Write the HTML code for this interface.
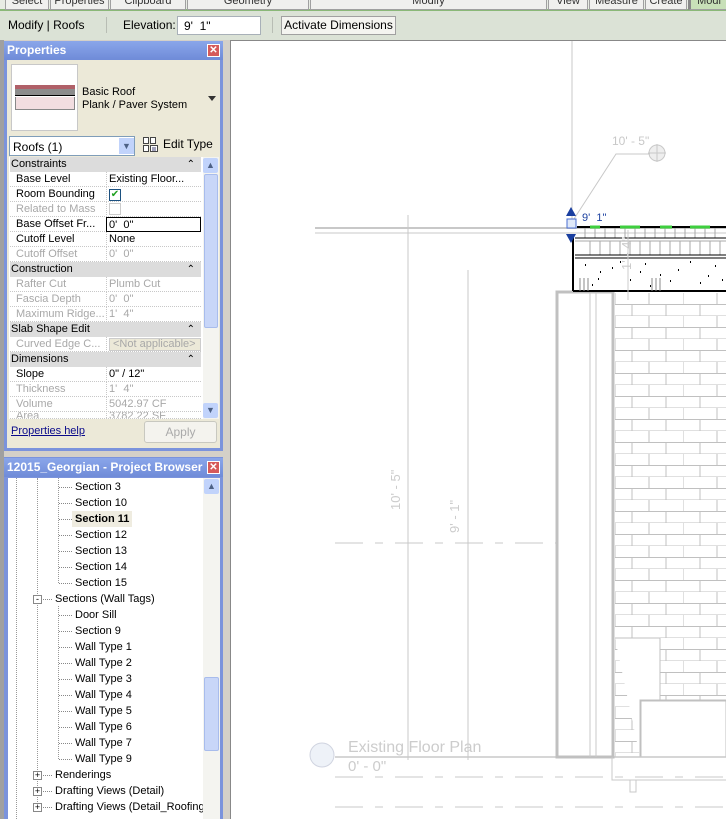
<!DOCTYPE html>
<html><head><meta charset="utf-8"><style>
*{margin:0;padding:0;box-sizing:border-box}
body{width:726px;height:819px;overflow:hidden;background:#fff;font-family:"Liberation Sans",sans-serif;font-size:11px;color:#000;position:relative}
.a{position:absolute}
.tab{position:absolute;top:0;height:10px;background:#f0f0ee;border:1px solid #a0a0a0;border-top:none;font-size:11px;line-height:2px;text-align:center;color:#333;overflow:hidden}
.hdr{position:absolute;height:19px;background:linear-gradient(#8aa6ea,#6f8bd8);color:#fff;font-weight:bold;font-size:12px;line-height:19px;padding-left:3px}
.x{position:absolute;right:3px;top:3px;width:13px;height:13px;background:#d65a5a;border:1px solid #fff;color:#fff;font-size:10px;line-height:11px;text-align:center}
.row{position:absolute;left:10px;width:191px;height:15px;border-bottom:1px dotted #c8c8c8;background:#fff;line-height:14px}
.row .l{position:absolute;left:6px}
.row .v{position:absolute;left:96px;top:0;height:15px;border-left:1px dotted #c8c8c8;padding-left:2px;width:95px}
.g{color:#a8a8a8}
.sec{position:absolute;left:10px;width:191px;height:15px;background:#dcdcdc;line-height:14px;padding-left:1px}
.sec:after{content:"\2303";position:absolute;right:6px;top:1px;font-size:10px}
.t{position:absolute;line-height:16px;height:16px}
.dl{position:absolute;border-top:1px dotted #888;height:0}
</style></head><body>
<div class="a" style="left:0;top:0;width:726px;height:40px;background:#dbe2d6"></div>
<div class="a" style="left:0;top:0;width:726px;height:11px;background:#e8ebe4;border-bottom:2px solid #8ab878"></div>
<div class="tab" style="left:5px;width:44px">Select</div>
<div class="tab" style="left:50px;width:59px">Properties</div>
<div class="tab" style="left:110px;width:76px">Clipboard</div>
<div class="tab" style="left:187px;width:122px">Geometry</div>
<div class="tab" style="left:310px;width:237px">Modify</div>
<div class="tab" style="left:548px;width:40px">View</div>
<div class="tab" style="left:589px;width:55px">Measure</div>
<div class="tab" style="left:645px;width:42px">Create</div>
<div class="tab" style="left:688px;width:40px;background:#c8e0b8;border-left:3px solid #888">Modi</div>
<div class="a" style="left:8px;top:18px;font-size:12px">Modify | Roofs</div>
<div class="a" style="left:106px;top:17px;width:1px;height:16px;background:#b8bdb4"></div>
<div class="a" style="left:123px;top:18px;font-size:12px">Elevation:</div>
<div class="a" style="left:177px;top:16px;width:84px;height:19px;background:#fff;border:1px solid #a8b0b8;padding:2px 0 0 6px;font-size:12px">9'&nbsp; 1"</div>
<div class="a" style="left:272px;top:17px;width:1px;height:16px;background:#b8bdb4"></div>
<div class="a" style="left:281px;top:16px;width:115px;height:19px;background:#f4f4f0;border:1px solid #a0a0a0;font-size:12px;text-align:center;line-height:17px">Activate Dimensions</div>
<div class="a" style="left:0;top:40px;width:231px;height:779px;background:#d4d0c8"></div>
<div class="a" style="left:0;top:40px;width:4px;height:779px;background:#a0a0a0"></div>
<div class="a" style="left:4px;top:41px;width:219px;height:410px;background:#7b93dc"></div>
<div class="a" style="left:7px;top:60px;width:213px;height:388px;background:#ece9d8"></div>
<div class="hdr" style="left:4px;top:41px;width:219px">Properties<div class="x">✕</div></div>
<div class="a" style="left:11px;top:64px;width:67px;height:67px;background:#fff;border:1px solid #c8c8c8"></div>
<div class="a" style="left:15px;top:85px;width:60px;height:4px;background:#b06068"></div>
<div class="a" style="left:15px;top:89px;width:60px;height:7px;background:#8c8c8c;border-bottom:1px solid #000"></div>
<div class="a" style="left:15px;top:97px;width:60px;height:13px;background:#f2dde0;border:1px solid #888;border-top:none"></div>
<div class="a" style="left:82px;top:86px;font-size:11px;line-height:13px">Basic Roof<br>Plank / Paver System</div>
<div class="a" style="left:208px;top:96px;border:4px solid transparent;border-top:5px solid #333"></div>
<div class="a" style="left:9px;top:136px;width:126px;height:20px;background:#fff;border:1px solid #7f9db9;padding:3px 0 0 3px;font-size:12px">Roofs (1)</div>
<div class="a" style="left:119px;top:138px;width:15px;height:16px;background:#c1d3fb;color:#4d6185;font-size:9px;text-align:center;line-height:16px">▼</div>
<svg class="a" style="left:142px;top:136px" width="18" height="17"><path d="M1.5 1.5h5v6h-5zM1.5 9.5h5v6h-5zM8.5 1.5h5v6h-5zM8.5 9.5h7v6h-7z" fill="#fff" stroke="#444"/><path d="M10 12h4M10 14h4" stroke="#447"/></svg>
<div class="a" style="left:163px;top:137px;font-size:12px">Edit Type</div>
<div class="a" style="left:9px;top:157px;width:210px;height:262px;background:#fff"></div>
<div class="sec" style="top:157px">Constraints</div>
<div class="row" style="top:172px"><span class="l">Base Level</span><span class="v">Existing Floor...</span></div>
<div class="row" style="top:187px"><span class="l">Room Bounding</span><span class="v"><span style="display:inline-block;width:12px;height:12px;border:1px solid #1c5180;color:#21a121;font-size:10px;line-height:10px;text-align:center;margin-top:1px">✔</span></span></div>
<div class="row g" style="top:202px"><span class="l">Related to Mass</span><span class="v"><span style="display:inline-block;width:12px;height:12px;border:1px solid #ccc;margin-top:1px"></span></span></div>
<div class="row" style="top:217px"><span class="l">Base Offset Fr...</span><span class="v" style="border:1px solid #000;height:15px">0'&nbsp; 0"</span></div>
<div class="row" style="top:232px"><span class="l">Cutoff Level</span><span class="v">None</span></div>
<div class="row g" style="top:247px"><span class="l">Cutoff Offset</span><span class="v">0'&nbsp; 0"</span></div>
<div class="sec" style="top:262px">Construction</div>
<div class="row g" style="top:277px"><span class="l">Rafter Cut</span><span class="v">Plumb Cut</span></div>
<div class="row g" style="top:292px"><span class="l">Fascia Depth</span><span class="v">0'&nbsp; 0"</span></div>
<div class="row g" style="top:307px"><span class="l">Maximum Ridge...</span><span class="v">1'&nbsp; 4"</span></div>
<div class="sec" style="top:322px">Slab Shape Edit</div>
<div class="row g" style="top:337px"><span class="l">Curved Edge C...</span><span class="v"><span style="display:inline-block;background:#ece9d8;border:1px solid #ccc;width:92px;height:13px;line-height:11px;padding-left:3px">&lt;Not applicable&gt;</span></span></div>
<div class="sec" style="top:352px">Dimensions</div>
<div class="row" style="top:367px"><span class="l">Slope</span><span class="v">0" / 12"</span></div>
<div class="row g" style="top:382px"><span class="l">Thickness</span><span class="v">1'&nbsp; 4"</span></div>
<div class="row g" style="top:397px"><span class="l">Volume</span><span class="v">5042.97 CF</span></div>
<div class="row g" style="top:412px;height:7px;overflow:hidden"><span class="l" style="top:-3px">Area</span><span class="v" style="top:-3px">3782.22 SF</span></div>
<div class="a" style="left:203px;top:157px;width:16px;height:262px;background:#f4f4f0"></div>
<div class="a" style="left:203px;top:158px;width:15px;height:15px;background:#c1d3fb;border-radius:2px;color:#4d6185;font-size:9px;text-align:center;line-height:15px">▲</div>
<div class="a" style="left:204px;top:174px;width:14px;height:154px;background:#c8d6f8;border:1px solid #a8bcec;border-radius:2px"></div>
<div class="a" style="left:203px;top:403px;width:15px;height:15px;background:#c1d3fb;border-radius:2px;color:#4d6185;font-size:9px;text-align:center;line-height:15px">▼</div>
<div class="a" style="left:11px;top:425px;color:#0a0a8a;text-decoration:underline;font-size:11px">Properties help</div>
<div class="a" style="left:144px;top:421px;width:73px;height:22px;border:1px solid #c8c8c0;border-radius:3px;background:#f4f3ee;color:#aaa;text-align:center;line-height:20px;font-size:12px">Apply</div>
<div class="a" style="left:4px;top:457px;width:219px;height:362px;background:#7b93dc"></div>
<div class="hdr" style="left:4px;top:458px;width:219px">12015_Georgian - Project Browser<div class="x">✕</div></div>
<div class="a" style="left:8px;top:478px;width:212px;height:341px;background:#fff"></div>
<div class="a" style="left:16px;top:478px;height:341px;border-left:1px dotted #999"></div>
<div class="a" style="left:37px;top:478px;height:330px;border-left:1px dotted #999"></div>
<div class="a" style="left:58px;top:478px;height:105px;border-left:1px dotted #999"></div>
<div class="a" style="left:58px;top:606px;height:153px;border-left:1px dotted #999"></div>
<div class="dl" style="left:59px;top:487px;width:13px"></div><div class="t" style="left:75px;top:479px">Section 3</div>
<div class="dl" style="left:59px;top:503px;width:13px"></div><div class="t" style="left:75px;top:495px">Section 10</div>
<div class="dl" style="left:59px;top:519px;width:13px"></div><div class="t" style="left:72px;top:511px;background:#efece0;font-weight:bold;padding:0 3px">Section 11</div>
<div class="dl" style="left:59px;top:535px;width:13px"></div><div class="t" style="left:75px;top:527px">Section 12</div>
<div class="dl" style="left:59px;top:551px;width:13px"></div><div class="t" style="left:75px;top:543px">Section 13</div>
<div class="dl" style="left:59px;top:567px;width:13px"></div><div class="t" style="left:75px;top:559px">Section 14</div>
<div class="dl" style="left:59px;top:583px;width:13px"></div><div class="t" style="left:75px;top:575px">Section 15</div>
<div class="a" style="left:33px;top:595px;width:9px;height:9px;border:1px solid #888;background:#fff;font-size:9px;line-height:6px;text-align:center">-</div>
<div class="dl" style="left:43px;top:599px;width:9px"></div><div class="t" style="left:55px;top:591px">Sections (Wall Tags)</div>
<div class="dl" style="left:59px;top:615px;width:13px"></div><div class="t" style="left:75px;top:607px">Door Sill</div>
<div class="dl" style="left:59px;top:631px;width:13px"></div><div class="t" style="left:75px;top:623px">Section 9</div>
<div class="dl" style="left:59px;top:647px;width:13px"></div><div class="t" style="left:75px;top:639px">Wall Type 1</div>
<div class="dl" style="left:59px;top:663px;width:13px"></div><div class="t" style="left:75px;top:655px">Wall Type 2</div>
<div class="dl" style="left:59px;top:679px;width:13px"></div><div class="t" style="left:75px;top:671px">Wall Type 3</div>
<div class="dl" style="left:59px;top:695px;width:13px"></div><div class="t" style="left:75px;top:687px">Wall Type 4</div>
<div class="dl" style="left:59px;top:711px;width:13px"></div><div class="t" style="left:75px;top:703px">Wall Type 5</div>
<div class="dl" style="left:59px;top:727px;width:13px"></div><div class="t" style="left:75px;top:719px">Wall Type 6</div>
<div class="dl" style="left:59px;top:743px;width:13px"></div><div class="t" style="left:75px;top:735px">Wall Type 7</div>
<div class="dl" style="left:59px;top:759px;width:13px"></div><div class="t" style="left:75px;top:751px">Wall Type 9</div>
<div class="a" style="left:33px;top:771px;width:9px;height:9px;border:1px solid #888;background:#fff;font-size:9px;line-height:7px;text-align:center">+</div>
<div class="dl" style="left:43px;top:775px;width:9px"></div><div class="t" style="left:55px;top:767px">Renderings</div>
<div class="a" style="left:33px;top:787px;width:9px;height:9px;border:1px solid #888;background:#fff;font-size:9px;line-height:7px;text-align:center">+</div>
<div class="dl" style="left:43px;top:791px;width:9px"></div><div class="t" style="left:55px;top:783px">Drafting Views (Detail)</div>
<div class="a" style="left:33px;top:803px;width:9px;height:9px;border:1px solid #888;background:#fff;font-size:9px;line-height:7px;text-align:center">+</div>
<div class="dl" style="left:43px;top:807px;width:9px"></div><div class="t" style="left:55px;top:799px;width:148px;overflow:hidden;white-space:nowrap">Drafting Views (Detail_Roofing)</div>
<div class="a" style="left:203px;top:478px;width:17px;height:341px;background:#f4f4f0"></div>
<div class="a" style="left:204px;top:479px;width:15px;height:15px;background:#c1d3fb;border-radius:2px;color:#4d6185;font-size:9px;text-align:center;line-height:15px">▲</div>
<div class="a" style="left:204px;top:677px;width:15px;height:74px;background:#c8d6f8;border:1px solid #a8bcec;border-radius:2px"></div>
<div class="a" style="left:230px;top:40px;width:496px;height:779px;background:#fff;border-left:1px solid #888;border-top:1px solid #888"></div>
<svg class="a" style="left:231px;top:41px" width="495" height="778">
<defs>
<pattern id="br" patternUnits="userSpaceOnUse" x="615" y="293" width="68" height="23">
<rect width="68" height="23" fill="#fff"/>
<path d="M0 11.5H68M0 23H68M0 0V11.5M34 0V11.5M17 11.5V23M51 11.5V23" stroke="#c0c0c0" stroke-width="1" fill="none"/>
</pattern>
</defs>
<g transform="translate(-231,-41)" fill="none" stroke="#c8c8c8" stroke-width="1">
<line x1="572" y1="41" x2="572" y2="222"/>
<line x1="315" y1="228" x2="726" y2="228" stroke-width="2"/>
<line x1="315" y1="233" x2="726" y2="233"/>
<circle cx="657" cy="153" r="8" fill="#eee"/>
<path d="M657 144V162M648 153H666"/>
<path d="M572 222L616 154H650"/>
<line x1="408" y1="215" x2="408" y2="760"/>
<line x1="468" y1="270" x2="468" y2="760"/>
<path d="M335 543H726" stroke-dasharray="28 12 8 12"/>
<rect x="615" y="293" width="111" height="464" fill="url(#br)" stroke="none"/>
<path d="M615 638H660V700H640V757M660 700H726M645 700V757M655 700H726" stroke="#c0c0c0" fill="#fff"/>
<rect x="641" y="701" width="85" height="56" fill="#fff" stroke="#c0c0c0"/>
<path d="M335 757H726" stroke-width="1.5"/>
<path d="M335 777H726" stroke-dasharray="28 12 8 12"/>
<path d="M335 807H726" stroke-dasharray="28 12 8 12"/>
<rect x="557" y="292" width="56" height="465" fill="#fff" stroke="#c0c0c0" stroke-width="3"/>
<line x1="590" y1="293" x2="590" y2="757"/><line x1="596" y1="293" x2="596" y2="757"/>
<path d="M612 757V780H726M630 780V792H636V780"/>
<circle cx="322" cy="755" r="12" fill="#eef2f8" stroke="#d0d4e0"/>
<path d="M575 241H726M590 241V255M600 241V255M610 241V255M620 241V255M630 241V255M640 241V255M650 241V255M660 241V255M670 241V255M680 241V255M690 241V255M700 241V255M710 241V255M720 241V255M585 228V238M595 228V238M605 228V238M615 228V238M625 228V238M635 228V238M645 228V238M655 228V238M665 228V238M675 228V238M685 228V238M695 228V238M705 228V238M715 228V238" stroke="#aaa"/>
<g stroke="#000" stroke-width="2">
<line x1="577" y1="227" x2="726" y2="227"/>
<line x1="573" y1="234" x2="573" y2="291"/>
<line x1="573" y1="291" x2="726" y2="291"/>
<line x1="575" y1="238" x2="726" y2="238" stroke-width="1"/>
<line x1="575" y1="258" x2="726" y2="258" stroke-width="1"/>
<line x1="575" y1="255" x2="726" y2="255" stroke-width="1"/>
</g>
<path d="M590 227H600M620 227H640M660 227H672M690 227H710" stroke="#3ecf3e" stroke-width="3"/>
<path d="M585 265h1M600 272h1M612 268h1M630 280h1M645 264h1M660 275h1M678 270h1M700 283h1M715 266h1M592 285h1M620 262h1M690 262h1M708 276h1M650 286h1M670 281h1M598 279h1M640 272h1M722 280h1" stroke="#000" stroke-width="2"/>
<path d="M580 278V291M584 278V291M588 278V291M652 278V291M656 278V291M660 278V291" stroke="#888"/>
<line x1="628" y1="230" x2="628" y2="300" stroke="#ccc"/>
</g>
<g transform="translate(-231,-41)">
<path d="M571 207L566 216H576Z" fill="#1a3fa0"/>
<path d="M571 243L566 234H576Z" fill="#1a3fa0"/>
<rect x="567" y="219" width="9" height="9" fill="#dfe8f8" stroke="#4a6ed0"/>
<text x="582" y="221" font-family="Liberation Sans" font-size="11" fill="#1a3fa0">9'&#160; 1"</text>
<text x="612" y="145" font-family="Liberation Sans" font-size="12" fill="#c8c8c8">10' - 5"</text>
<text x="348" y="752" font-family="Liberation Sans" font-size="16" fill="#ccc">Existing Floor Plan</text>
<text x="348" y="771" font-family="Liberation Sans" font-size="15" fill="#ccc">0' - 0"</text>
<text transform="translate(400,510) rotate(-90)" font-family="Liberation Sans" font-size="13" fill="#ccc">10' - 5"</text>
<text transform="translate(459,533) rotate(-90)" font-family="Liberation Sans" font-size="13" fill="#ccc">9' - 1"</text>
<text transform="translate(631,270) rotate(-90)" font-family="Liberation Sans" font-size="13" fill="#ccc">1' - 4"</text>
</g>
</svg>
</body></html>
